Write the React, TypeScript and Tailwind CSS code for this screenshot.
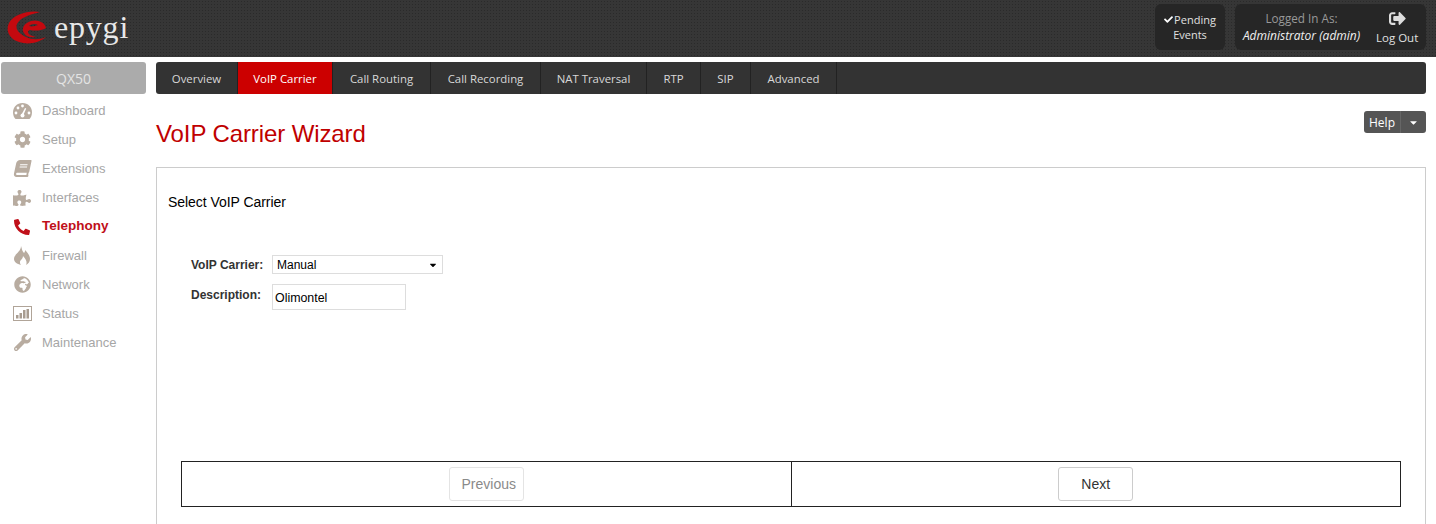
import React from 'react'
import { FaCog, FaBook, FaPuzzlePiece, FaPhone, FaGlobeAfrica, FaWrench, FaCheck, FaSignOutAlt, FaCaretDown } from 'react-icons/fa'

const tabs = [
  { label: 'Overview', w: 'w-[82px]' },
  { label: 'VoIP Carrier', w: 'w-[95px]', active: true },
  { label: 'Call Routing', w: 'w-[98px]' },
  { label: 'Call Recording', w: 'w-[110px]' },
  { label: 'NAT Traversal', w: 'w-[106px]' },
  { label: 'RTP', w: 'w-[54px]' },
  { label: 'SIP', w: 'w-[50px]' },
  { label: 'Advanced', w: 'w-[86px]' },
]

const DashboardIcon = () => (
  <svg width="19" height="16" viewBox="0 0 19 16">
    <path fill="#b8aca0" d="M9.5 0C4 0 0 4 0 9.5 0 12 1 14.5 2.5 16h14c1.500-1.500 2.500-4 2.500-6.500C19 4 15 0 9.500 0z" />
    <g fill="#fff">
      <circle cx="3" cy="10" r="1.400" />
      <circle cx="5" cy="5" r="1.400" />
      <circle cx="9.500" cy="3" r="1.400" />
      <circle cx="16" cy="10" r="1.400" />
      <circle cx="9.500" cy="12.500" r="2" />
      <path d="M8.600 11.500l3.400-6.500 1.200.6-3 6.800z" />
    </g>
  </svg>
)

const FlameIcon = () => (
  <svg width="16" height="19" viewBox="0 0 16 19">
    <path fill="#b8aca0" d="M7 0c1 3 1 5 3 7 1-1 1-2 1-3 3 3 5 6 5 9 0 3-2 5-4 6 1-2 1-5-3-9 0 3-3 4-3 6 0 1 0 2 1 3C3 18 0 16 0 13 0 8 7 6 7 0z" />
  </svg>
)

const StatusIcon = () => (
  <svg width="19" height="15" viewBox="0 0 19 15">
    <rect x="0.5" y="0.5" width="18" height="14" fill="#fff" stroke="#b0a498" />
    <rect x="3" y="9" width="2.5" height="3.5" fill="#a89c90" />
    <rect x="6.5" y="7" width="2.5" height="5.5" fill="#a89c90" />
    <rect x="10" y="4" width="2.5" height="8.5" fill="#a89c90" />
    <rect x="13.5" y="3" width="2.5" height="9.5" fill="#a89c90" />
  </svg>
)

const menu = [
  { label: 'Dashboard', icon: <DashboardIcon /> },
  { label: 'Setup', icon: <FaCog size={17} /> },
  { label: 'Extensions', icon: <FaBook size={17} className="-skew-x-12" /> },
  { label: 'Interfaces', icon: <FaPuzzlePiece size={18} /> },
  { label: 'Telephony', icon: <FaPhone size={16} className="scale-x-[-1]" />, active: true },
  { label: 'Firewall', icon: <FlameIcon /> },
  { label: 'Network', icon: <FaGlobeAfrica size={17} /> },
  { label: 'Status', icon: <StatusIcon /> },
  { label: 'Maintenance', icon: <FaWrench size={17} /> },
]

const Logo = () => (
  <svg width="40" height="33" viewBox="0 0 40 33">
    <path fill="#c4090f" d="M33 1C22 -1 7 3 2 12c-4 8 1 16 10 19 9 3 20 1 27-5-7 3-14 3-20 0C12 23 8 18 10 13c3-6 11-9 23-12z" />
    <path fill="#c4090f" d="M39 17c-1-6-9-9-15-7-7 2-10 8-7 12 2 4 7 5 12 4-5-1-8-3-8-5 0-1 1-2 2-2 5 1 11 1 16-2zm-17-2c2-2 6-3 9-1-3 1-6 2-9 1z" />
  </svg>
)

export default function App() {
  return (
    <div className="h-[524px] overflow-hidden bg-white font-['Liberation_Sans',sans-serif]">
      <header className="flex h-[57px] items-start justify-between bg-[#363636] bg-[radial-gradient(#2a2a2a_1px,transparent_1px)] bg-[length:3px_3px] pr-[10px]">
        <div className="flex items-center pl-[7px] pt-[8px]">
          <Logo />
          <span className="ml-[7px] -mt-[1px] font-['Liberation_Serif',serif] text-[32px] leading-[40px] tracking-[0.8px] text-[#e8e8e8]">epygi</span>
        </div>
        <div className="flex gap-[10px] pt-[4px] font-['Open_Sans',sans-serif] text-[11px] text-[#e0e0e0]">
          <div className="flex h-[46px] w-[70px] flex-col items-center justify-center rounded-md bg-[#262626] leading-[15px]">
            <span className="flex items-center"><FaCheck size={9} className="mr-[1px] text-white" />Pending</span>
            <span>Events</span>
          </div>
          <div className="flex h-[46px] w-[191px] items-center rounded-md bg-[#262626] pl-[8px]">
            <div className="flex w-[117px] flex-col items-center whitespace-nowrap leading-[17px]">
              <span className="text-[11.7px] text-[#999999]">Logged In As:</span>
              <span className="text-[12px] italic text-[#f0f0f0]">Administrator (admin)</span>
            </div>
            <div className="ml-[16px] flex flex-col items-center text-[11.5px] leading-[14px]">
              <FaSignOutAlt size={17} className="mb-[4px] text-[#dddddd]" />
              <span>Log Out</span>
            </div>
          </div>
        </div>
      </header>

      <div className="flex pt-[5px]">
        <aside className="ml-px w-[145px] shrink-0">
          <div className="flex h-[32px] items-center justify-center rounded-[3px] bg-[#ababab] font-['Open_Sans',sans-serif] text-[14px] text-[#e4e4e4]">QX50</div>
          <nav className="mt-[2px] flex flex-col">
            {menu.map((item) => (
              <div key={item.label} className={`flex h-[29px] items-center ${item.active ? 'text-[13.5px] font-bold text-[#c0101a]' : 'text-[13px] text-[#a6a6a6]'}`}>
                <span className={`flex w-[41px] justify-center pl-[1px] ${item.active ? 'text-[#c0101a]' : 'text-[#b8aca0]'}`}>{item.icon}</span>
                <span>{item.label}</span>
              </div>
            ))}
          </nav>
        </aside>

        <main className="ml-[10px] mr-[10px] flex-1">
          <div className="flex h-[32px] overflow-hidden rounded-[3px] bg-[#333333] font-['Open_Sans',sans-serif] text-[11.4px] text-[#d8d8d8]">
            {tabs.map((t) => (
              <div key={t.label} className={`flex ${t.w} items-center justify-center border-r border-[#222222] pt-[2px] ${t.active ? 'bg-[#cc0000] text-white' : ''}`}>{t.label}</div>
            ))}
          </div>

          <div className="flex items-start justify-between">
            <h1 className="pt-[25px] text-[24px] leading-[30px] tracking-[-0.1px] text-[#c00000]">VoIP Carrier Wizard</h1>
            <div className="mt-[17px] flex h-[22px] w-[62px] rounded-[3px] bg-[#555555] font-['Open_Sans',sans-serif] text-[12px] text-white">
              <span className="flex w-[37px] items-center justify-center border-r border-[#666666] pt-[1px]">Help</span>
              <span className="flex flex-1 items-center justify-center"><FaCaretDown size={11} /></span>
            </div>
          </div>

          <section className="mt-[18px] h-[400px] border border-[#cccccc] pl-[11px]">
            <p className="pt-[26px] text-[14px] leading-[16px] tracking-[-0.05px] text-black">Select VoIP Carrier</p>
            <div className="ml-[23px] mt-[45px] flex flex-col gap-[10px] text-[12px] text-[#222222]">
              <div className="flex items-center">
                <label className="w-[81px] font-bold text-[#333333]">VoIP Carrier:</label>
                <div className="flex h-[19px] w-[171px] items-center justify-between border border-[#dddddd] px-[4px] text-black">
                  <span>Manual</span>
                  <FaCaretDown size={10} className="text-black" />
                </div>
              </div>
              <div className="flex items-start">
                <label className="w-[81px] pt-[2px] font-bold text-[#333333]">Description:</label>
                <input readOnly value="Olimontel" className="h-[26px] w-[134px] border border-[#dddddd] px-[2px] pt-[2px] text-[12.4px] text-black outline-none" />
              </div>
            </div>

            <div className="mr-[24px] ml-[13px] mt-[151px] flex h-[46px] border border-[#222222]">
              <div className="flex flex-1 items-center justify-center border-r border-[#222222]">
                <button className="h-[34px] w-[75px] rounded-[3px] border border-[#e4e4e4] pl-[5px] text-[14px] text-[#8a8a8a]">Previous</button>
              </div>
              <div className="flex flex-1 items-center justify-center">
                <button className="h-[34px] w-[75px] rounded-[3px] border border-[#cccccc] text-[14px] text-[#333333]">Next</button>
              </div>
            </div>
          </section>
        </main>
      </div>
    </div>
  )
}
